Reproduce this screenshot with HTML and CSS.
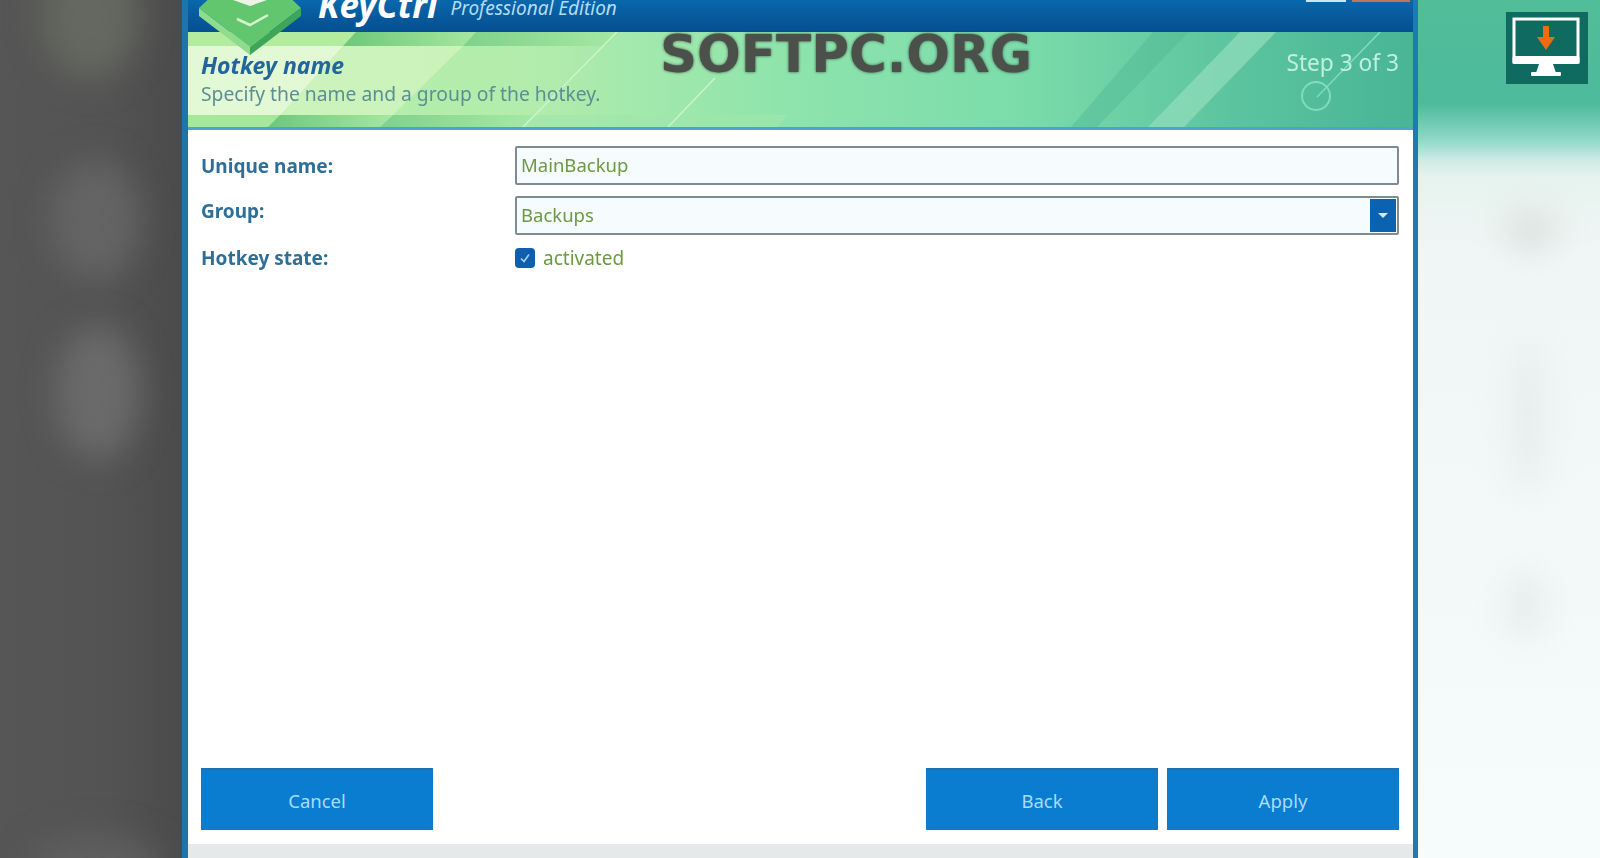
FILE: index.html
```html
<!DOCTYPE html>
<html lang="en">
<head>
    <meta charset="UTF-8">
    <meta name="viewport" content="width=device-width, initial-scale=1.0">
    <title>KeyCtrl - Hotkey name</title>
    <link rel="stylesheet" href="styles.css">
</head>
<body>
    <div class="backdrop-left">
        <div class="smudge smudge-top"></div>
        <div class="smudge smudge-one"></div>
        <div class="smudge smudge-two"></div>
        <div class="smudge smudge-three"></div>
    </div>

    <div class="window">
        <div class="titlebar">
            <span class="app-name">KeyCtrl</span>
            <span class="app-edition">Professional Edition</span>
            <div class="win-buttons">
                <span class="win-min"></span>
                <span class="win-close"></span>
            </div>
        </div>

        <div class="banner">
            <svg class="banner-art" viewBox="0 0 1225 95" preserveAspectRatio="none">
                <defs>
                    <linearGradient id="bandA" x1="0" y1="0" x2="1" y2="0">
                        <stop offset="0" stop-color="#6cc87a"/>
                        <stop offset="1" stop-color="#a6e79e"/>
                    </linearGradient>
                    <linearGradient id="bandB" x1="0" y1="0" x2="1" y2="0">
                        <stop offset="0" stop-color="#7fd28a"/>
                        <stop offset="1" stop-color="#a6e8a4"/>
                    </linearGradient>
                </defs>
                <polygon points="0,0 168,0 155,14 0,14" fill="#b4ec9f"/>
                <polygon points="168,0 288,0 275,14 155,14" fill="url(#bandA)"/>
                <polygon points="288,0 432,0 418,14 275,14" fill="url(#bandB)"/>
                <polygon points="0,83 92,83 80,95 0,95" fill="#a6e79a"/>
                <polygon points="92,83 205,83 192,95 80,95" fill="url(#bandA)"/>
                <polygon points="205,83 345,83 333,95 192,95" fill="url(#bandB)"/>
                <polygon points="345,83 600,83 590,95 333,95" fill="#a0e6a8" opacity="0.6"/>
                <polygon points="0,14 275,14 205,83 0,83" fill="#d2f4c0" opacity="0.8"/>
                <polygon points="0,14 155,14 92,83 0,83" fill="#ecfadf" opacity="0.7"/>
                <polygon points="1052,0 1088,0 996,95 960,95" fill="#8fdcba" opacity="0.75"/>
                <polygon points="965,0 1001,0 909,95 883,95" fill="#4fb795" opacity="0.45"/>
                <line x1="429" y1="0" x2="335" y2="95" stroke="#c9f5c8" stroke-width="1.5"/>
                <line x1="527" y1="46" x2="480" y2="95" stroke="#c9f5c8" stroke-width="1.5"/>
                <line x1="1192" y1="0" x2="1129" y2="65" stroke="#7fdcbd" stroke-width="1.5"/>
                <circle cx="1128" cy="64" r="14" fill="none" stroke="#7fdcbd" stroke-width="2"/>
            </svg>
            <div class="banner-text">
                <h1>Hotkey name</h1>
                <p>Specify the name and a group of the hotkey.</p>
            </div>
            <span class="step">Step 3 of 3</span>
        </div>
        <div class="banner-line"></div>

        <div class="form">
            <label class="form-label">Unique name:</label>
            <div class="field"><span class="field-text">MainBackup</span></div>

            <label class="form-label label-group">Group:</label>
            <div class="field field-select">
                <span class="field-text">Backups</span>
                <span class="select-btn"><i class="select-arrow"></i></span>
            </div>

            <label class="form-label">Hotkey state:</label>
            <div class="check-row">
                <span class="checkbox">
                    <svg viewBox="0 0 20 20" width="20" height="20"><path d="M6 10.500l3 3 5-7" fill="none" stroke="#a9d3f5" stroke-width="1.500"/></svg>
                </span>
                <span class="check-text">activated</span>
            </div>
        </div>

        <div class="actions">
            <button class="btn">Cancel</button>
            <div class="actions-right">
                <button class="btn">Back</button>
                <button class="btn">Apply</button>
            </div>
        </div>
        <div class="footer"></div>

        <svg class="logo" viewBox="0 0 106 56" width="106" height="56">
            <polygon points="53,-40 104,8 53,47 2,8" fill="#62c66e"/>
            <polygon points="2,8 53,47 53,55 2,16" fill="#8fdc8e"/>
            <polygon points="104,8 53,47 53,55 104,16" fill="#3fa55a"/>
            <polygon points="53,6 70,0 36,0" fill="#eef2e8"/>
            <path d="M40 19l13 6 18-10" fill="none" stroke="#d6f5cf" stroke-width="2.500"/>
        </svg>

        <div class="watermark">SOFTPC.ORG</div>
    </div>

    <div class="backdrop-right">
        <div class="smudge smudge-pale smudge-four"></div>
        <div class="smudge smudge-pale smudge-five"></div>
        <div class="smudge smudge-pale smudge-six"></div>
        <div class="tile">
            <svg viewBox="0 0 82 72" width="82" height="72">
                <rect x="8" y="7" width="64" height="43" fill="#0f6b5f" stroke="#fff" stroke-width="3"/>
                <rect x="6.500" y="44" width="67" height="8" rx="2" fill="#fff"/>
                <polygon points="33,52 47,52 50,61 30,61" fill="#fff"/>
                <rect x="25" y="60" width="30" height="4" rx="1" fill="#fff"/>
                <rect x="37" y="14" width="6" height="12" fill="#f26a10"/>
                <polygon points="31,25 49,25 40,38" fill="#f26a10"/>
            </svg>
        </div>
    </div>
</body>
</html>
```

FILE: styles.css
```css
html, body {
    height: 100%;
}
body {
    margin: 0;
    padding: 0;
    display: flex;
    overflow: hidden;
    font-family: "Noto Sans", "Open Sans", sans-serif;
    background-color: #fff;
}

/* blurred desktop either side of the dialog */
.backdrop-left {
    width: 182px;
    flex: none;
    position: relative;
    overflow: hidden;
    background: linear-gradient(to right, #565656 0%, #535353 60%, #4b4b4b 100%);
}
.smudge {
    position: absolute;
    background-color: #6a6a6a;
    filter: blur(16px);
    border-radius: 50%;
}
.smudge-top {
    left: 40px;
    top: -50px;
    width: 100px;
    height: 130px;
    background-color: #646860;
}
.smudge-one {
    left: 50px;
    top: 160px;
    width: 90px;
    height: 120px;
    background-color: #646464;
}
.smudge-two {
    left: 55px;
    top: 325px;
    width: 85px;
    height: 135px;
}
.smudge-three {
    left: 30px;
    top: 835px;
    width: 130px;
    height: 60px;
    background-color: #5f5f5f;
}
.backdrop-right {
    width: 182px;
    flex: none;
    position: relative;
    overflow: hidden;
    background: linear-gradient(to bottom, #52bd98 0%, #4dba9b 103px, #8fd8c8 140px, #cfeae4 160px, #e6f3ee 177px, #f0f6f6 260px, #f6fbfb 100%);
}
.smudge-pale {
    background-color: #dfe5e3;
    filter: blur(14px);
}
.smudge-four {
    left: 85px;
    top: 205px;
    width: 55px;
    height: 50px;
}
.smudge-five {
    left: 90px;
    top: 340px;
    width: 40px;
    height: 150px;
    background-color: #e8eeee;
}
.smudge-six {
    left: 85px;
    top: 570px;
    width: 45px;
    height: 70px;
    background-color: #e8eeee;
}
.tile {
    position: relative;
    width: 82px;
    height: 72px;
    margin: 12px 0 0 88px;
    background-color: #0f6b5f;
}
.tile svg {
    display: block;
}

/* dialog */
.window {
    flex: 1;
    position: relative;
    display: flex;
    flex-direction: column;
    min-width: 0;
    background-color: #fff;
    border-left: 6px solid #1f74aa;
    border-right: 5px solid #1b7ab8;
}
.titlebar {
    height: 32px;
    flex: none;
    display: flex;
    align-items: flex-end;
    overflow: hidden;
    position: relative;
    background: linear-gradient(to bottom, #0868ac 0%, #07599c 55%, #045092 100%);
}
.app-name {
    margin-left: 130px;
    margin-bottom: 11px;
    font-size: 35px;
    line-height: 32px;
    font-weight: bold;
    font-style: italic;
    color: #fff;
}
.app-edition {
    margin-left: 13px;
    margin-bottom: 14px;
    font-size: 19px;
    line-height: 20px;
    font-style: italic;
    color: #b4dcf6;
}
.win-buttons {
    position: absolute;
    top: 0;
    right: 3px;
    display: flex;
    gap: 6px;
}
.win-min {
    width: 40px;
    height: 2px;
    background-color: #cfe6f8;
}
.win-close {
    width: 58px;
    height: 2px;
    background-color: #c27463;
}

.banner {
    height: 95px;
    flex: none;
    position: relative;
    overflow: hidden;
    background: linear-gradient(to right, #b5edaa 0%, #b3ecac 28%, #8fe4ac 48%, #7bdcaa 68%, #5cc49f 85%, #49b595 100%);
}
.banner-art {
    position: absolute;
    left: 0;
    top: 0;
    width: 100%;
    height: 100%;
}
.banner-text {
    position: relative;
    padding: 17px 0 0 13px;
    filter: blur(0.4px);
}
.banner-text h1 {
    margin: 0;
    font-size: 23px;
    line-height: 32px;
    font-weight: bold;
    font-style: italic;
    color: #22669a;
}
.banner-text p {
    margin: 0;
    font-size: 19.300px;
    line-height: 26px;
    color: #5b8f93;
}
.step {
    position: absolute;
    top: 16px;
    right: 14px;
    font-size: 22.700px;
    line-height: 30px;
    color: #c0f0df;
    filter: blur(0.4px);
}
.banner-line {
    height: 3px;
    flex: none;
    background-color: #4aa3d6;
}

.form {
    flex: 1;
    display: grid;
    grid-template-columns: 314px 1fr;
    grid-template-rows: 39px 39px 23px;
    row-gap: 11px;
    align-content: start;
    padding: 16px 14px 0 13px;
}
.form-label {
    align-self: center;
    font-size: 19px;
    font-weight: bold;
    color: #2f6f97;
    filter: blur(0.4px);
}
.label-group {
    margin-bottom: 9px;
}
.field {
    display: flex;
    align-items: center;
    padding-left: 4px;
    border: 2px solid #7f8c8f;
    border-radius: 2px;
    background-color: #f6fcfd;
    font-size: 18.500px;
    color: #6c9a42;
    filter: blur(0.3px);
}
.field-text {
    margin-bottom: 2px;
}
.field-select {
    justify-content: space-between;
}
.select-btn {
    width: 26px;
    margin: 1px;
    align-self: stretch;
    display: flex;
    align-items: center;
    justify-content: center;
    background-color: #0a62b0;
}
.select-arrow {
    width: 0;
    height: 0;
    border-left: 5px solid transparent;
    border-right: 5px solid transparent;
    border-top: 5px solid #cfe9fb;
}
.check-row {
    display: flex;
    align-items: center;
    gap: 8px;
}
.checkbox {
    width: 20px;
    height: 20px;
    flex: none;
    border-radius: 4px;
    background-color: #0f5fb0;
}
.checkbox svg {
    display: block;
}
.check-text {
    font-size: 19px;
    color: #6c9a42;
    filter: blur(0.3px);
}

.actions {
    flex: none;
    display: flex;
    justify-content: space-between;
    padding: 0 14px 14px 13px;
}
.actions-right {
    display: flex;
    gap: 9px;
}
.btn {
    width: 232px;
    height: 62px;
    border: none;
    border-top: 2px solid #1c70b4;
    background-color: #0a7dd1;
    font-family: inherit;
    font-size: 18.500px;
    color: #a8dcfb;
}
.footer {
    height: 14px;
    flex: none;
    background-color: #e6e9e9;
}

/* logo hangs over the titlebar and banner */
.logo {
    position: absolute;
    left: 9px;
    top: 0;
}
.watermark {
    position: absolute;
    left: 472px;
    top: 26px;
    font-family: "DejaVu Sans", sans-serif;
    font-size: 51.500px;
    line-height: 56px;
    font-weight: bold;
    color: #4b504a;
    text-shadow: 0 0 3px #3d4a42;
}
```
